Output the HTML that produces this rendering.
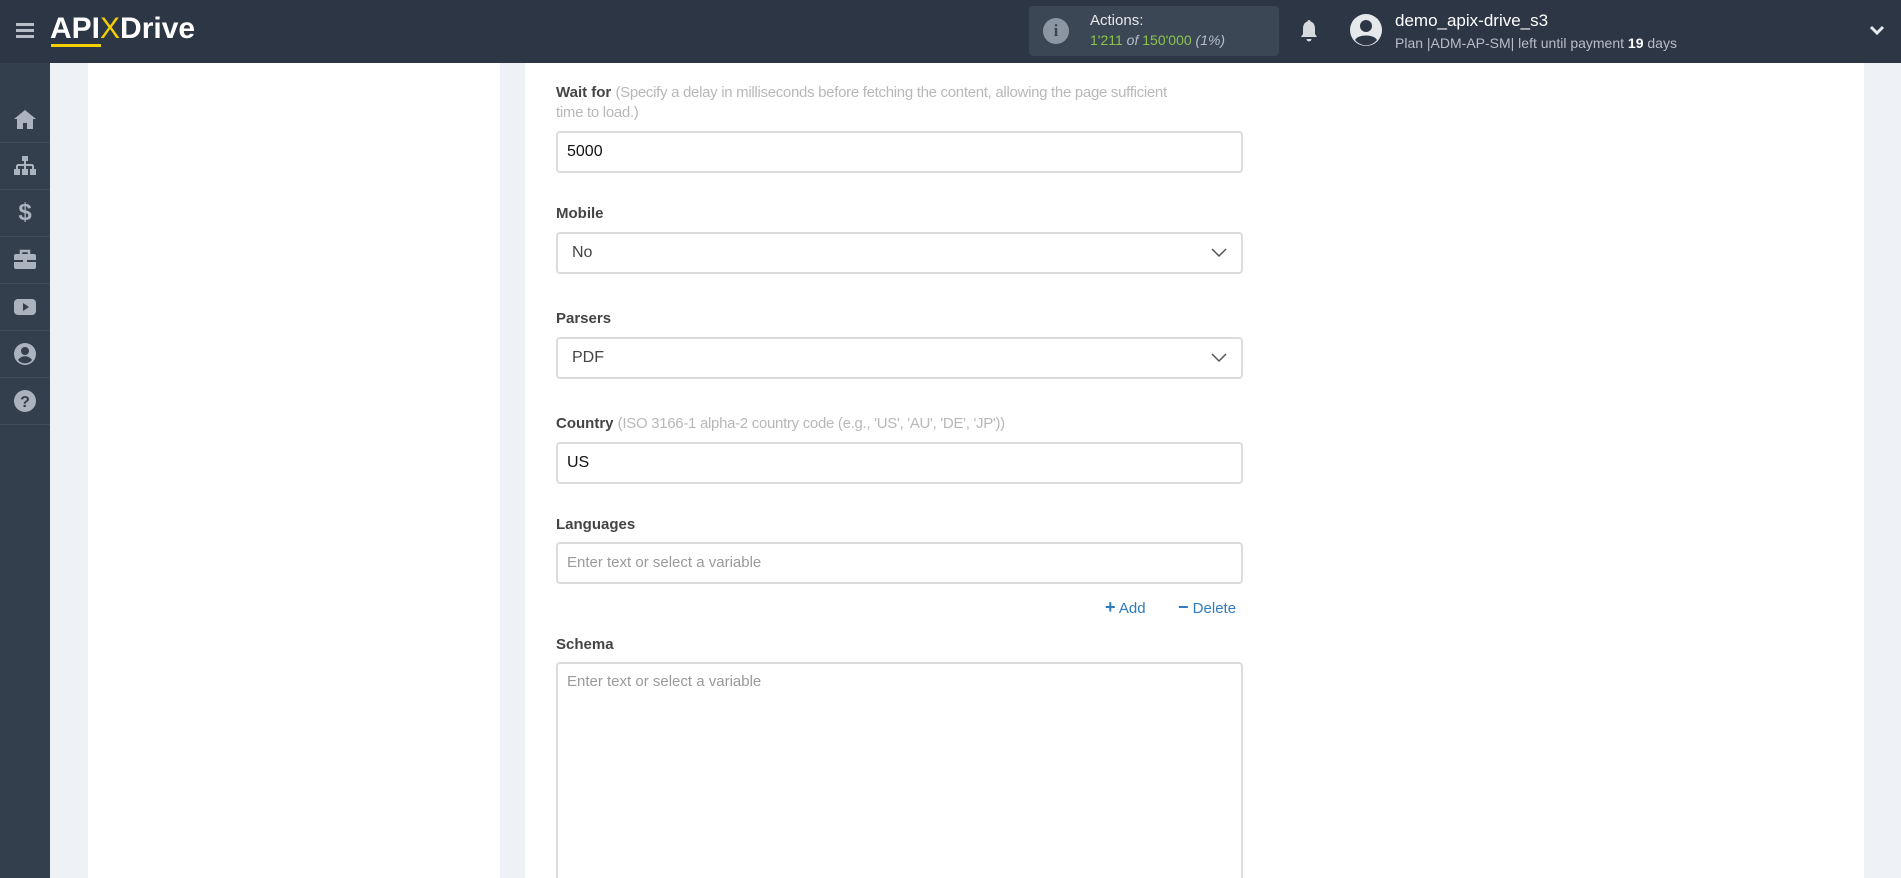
<!DOCTYPE html>
<html style="width:1901px;height:878px;overflow:hidden"><head><meta charset="utf-8"><style>
*{box-sizing:border-box;margin:0;padding:0}
body{width:1901px;height:878px;overflow:hidden;background:#eef1f6;font-family:"Liberation Sans",sans-serif;position:relative}
.hdr{position:absolute;left:0;top:0;width:1901px;height:63px;background:#2c3644}
.side{position:absolute;left:0;top:63px;width:50px;height:815px;background:#343f4d}
.side .it{position:absolute;left:0;width:50px;height:47px;border-bottom:1px solid #414c5a;display:flex;align-items:center;justify-content:center}
.panel{position:absolute;background:#fff;top:63px;height:815px}
.lbl{position:absolute;left:556px;font-size:15px;font-weight:bold;color:#444;line-height:20px}
.lbl span{font-weight:normal;color:#b8b8b8;letter-spacing:-0.3px}
.inp{position:absolute;left:556px;width:687px;height:42px;border:2px solid #dcdcdc;border-radius:4px;background:#fff;font-size:16px;color:#111;padding-left:9px;line-height:38px}
.sel{padding-left:14px;color:#444}
.ph{color:#9a9a9a;font-size:15px}
.chev{position:absolute;right:14px;top:14px}
</style></head><body>
<div class="hdr">
  <div style="position:absolute;left:16px;top:23px;width:18px;height:3px;background:#b7bec8;box-shadow:0 6px 0 #b7bec8,0 12px 0 #b7bec8"></div>
  <div style="position:absolute;left:50px;top:12px;font-size:30px;font-weight:bold;color:#fff;letter-spacing:0px">API<span style="color:#f5d000;font-weight:normal">X</span>Drive</div>
  <div style="position:absolute;left:51px;top:44px;width:50px;height:3px;background:#f5d000"></div>
  <div style="position:absolute;left:1029px;top:6px;width:250px;height:50px;background:#3b4754;border-radius:4px">
    <div style="position:absolute;left:14px;top:12px;width:26px;height:26px;border-radius:50%;background:#8c96a2;color:#3b4754;font-weight:bold;font-size:17px;text-align:center;line-height:26px;font-family:'Liberation Serif',serif">i</div>
    <div style="position:absolute;left:61px;top:6px;color:#e6e9ec;font-size:15px">Actions:</div>
    <div style="position:absolute;left:61px;top:26px;color:#8bc34a;font-size:14px">1'211 <i style="color:#b7bec8">of</i> 150'000 <i style="color:#b7bec8">(1%)</i></div>
  </div>
  <svg style="position:absolute;left:1299px;top:19px" width="20" height="24" viewBox="0 0 20 24"><path d="M10 1c-1 0-1.5.7-1.5 1.5C5 3.5 4 6.5 4 10v5l-2 3h16l-2-3v-5c0-3.5-1-6.5-4.5-7.5C11.5 1.7 11 1 10 1z" fill="#d6dadf"/><path d="M7.5 20a2.5 2.5 0 0 0 5 0z" fill="#d6dadf"/></svg>
  <svg style="position:absolute;left:1350px;top:14px" width="32" height="32" viewBox="0 0 32 32"><circle cx="16" cy="16" r="16" fill="#e6e9ec"/><circle cx="16" cy="12" r="6" fill="#2c3644"/><path d="M5 26c3-6 19-6 22 0a14 14 0 0 1-22 0z" fill="#2c3644"/></svg>
  <div style="position:absolute;left:1395px;top:11px;color:#fff;font-size:17px">demo_apix-drive_s3</div>
  <div style="position:absolute;left:1395px;top:35px;color:#b7bec8;font-size:14px">Plan |ADM-AP-SM| left until payment <b style="color:#fff">19</b> days</div>
  <svg style="position:absolute;left:1869px;top:25px" width="16" height="12" viewBox="0 0 16 12"><path d="M2 2l6 6 6-6" stroke="#e6e9ec" stroke-width="3" fill="none"/></svg>
</div>
<div class="side">
  <div class="it" style="top:33px"><svg width="24" height="22" viewBox="0 0 24 22"><path d="M12 2L1 11h3v10h6v-6h4v6h6V11h3z" fill="#aab3be"/></svg></div>
  <div class="it" style="top:80px"><svg width="24" height="22" viewBox="0 0 24 22"><rect x="9" y="1" width="6" height="5" fill="#aab3be"/><path d="M12 6v4M4 10h16M4 10v5M12 10v5M20 10v5" stroke="#aab3be" stroke-width="2" fill="none"/><rect x="1" y="14" width="6" height="6" fill="#aab3be"/><rect x="9" y="14" width="6" height="6" fill="#aab3be"/><rect x="17" y="14" width="6" height="6" fill="#aab3be"/></svg></div>
  <div class="it" style="top:127px;color:#aab3be;font-size:24px;font-weight:bold">$</div>
  <div class="it" style="top:174px"><svg width="24" height="22" viewBox="0 0 24 22"><path d="M8 5V2h8v3" stroke="#aab3be" stroke-width="2.5" fill="none"/><rect x="1" y="5" width="22" height="15" rx="2" fill="#aab3be"/><rect x="1" y="11" width="22" height="2" fill="#343f4d"/><rect x="10" y="10" width="4" height="4" fill="#aab3be"/></svg></div>
  <div class="it" style="top:221px"><svg width="24" height="20" viewBox="0 0 24 20"><rect x="1" y="2" width="22" height="16" rx="4" fill="#aab3be"/><path d="M10 6v8l6-4z" fill="#343f4d"/></svg></div>
  <div class="it" style="top:268px"><svg width="24" height="24" viewBox="0 0 24 24"><circle cx="12" cy="12" r="11" fill="#aab3be"/><circle cx="12" cy="9" r="4" fill="#343f4d"/><path d="M5 18c3-5 11-5 14 0a9 9 0 0 1-14 0z" fill="#343f4d"/></svg></div>
  <div class="it" style="top:315px"><svg width="24" height="24" viewBox="0 0 24 24"><circle cx="12" cy="12" r="11" fill="#aab3be"/><text x="12" y="18" text-anchor="middle" font-family="Liberation Sans" font-weight="bold" font-size="16" fill="#343f4d">?</text></svg></div>
</div>
<div class="panel" style="left:88px;width:412px"></div>
<div class="panel" style="left:525px;width:1339px"></div>

<div class="lbl" style="top:83px;width:630px">Wait for <span>(Specify a delay in milliseconds before fetching the content, allowing the page sufficient time to load.)</span></div>
<div class="inp" style="top:131px">5000</div>
<div class="lbl" style="top:204px">Mobile</div>
<div class="inp sel" style="top:232px">No<svg class="chev" width="16" height="10" viewBox="0 0 16 10"><path d="M1 1l7 7 7-7" stroke="#555" stroke-width="1.5" fill="none"/></svg></div>
<div class="lbl" style="top:309px">Parsers</div>
<div class="inp sel" style="top:337px">PDF<svg class="chev" width="16" height="10" viewBox="0 0 16 10"><path d="M1 1l7 7 7-7" stroke="#555" stroke-width="1.5" fill="none"/></svg></div>
<div class="lbl" style="top:414px">Country <span>(ISO 3166-1 alpha-2 country code (e.g., 'US', 'AU', 'DE', 'JP'))</span></div>
<div class="inp" style="top:442px">US</div>
<div class="lbl" style="top:515px">Languages</div>
<div class="inp" style="top:542px"><span class="ph">Enter text or select a variable</span></div>
<div style="position:absolute;left:1105px;top:597px;font-size:15px;color:#2f7bc0"><b style="font-size:18px">+</b> Add</div>
<div style="position:absolute;left:1178px;top:597px;font-size:15px;color:#2f7bc0"><b style="font-size:18px">−</b> Delete</div>
<div class="lbl" style="top:635px">Schema</div>
<div class="inp" style="top:662px;height:230px;line-height:20px;padding-top:8px"><span class="ph">Enter text or select a variable</span></div>
</body></html>
